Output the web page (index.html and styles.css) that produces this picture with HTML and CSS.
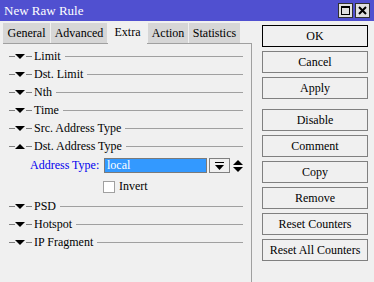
FILE: index.html
```html
<!DOCTYPE html>
<html lang="en">
<head>
  <meta charset="UTF-8" />
  <title>New Raw Rule</title>
  <link rel="stylesheet" href="styles.css">
</head>
<body>
  <div class="title-bar">
    <span class="title">New Raw Rule</span>
    <div class="win-buttons">
      <span class="win-btn"><svg width="9" height="9" viewBox="0 0 9 9"><rect x="0.5" y="0.5" width="8" height="8" fill="none" stroke="#000"/><line x1="0" y1="1.5" x2="9" y2="1.5" stroke="#000"/></svg></span>
      <span class="win-btn"><svg width="9" height="9" viewBox="0 0 9 9"><path d="M1 1 L8 8 M8 1 L1 8" stroke="#000" stroke-width="2"/></svg></span>
    </div>
  </div>

  <div class="main">
    <div class="left">
      <div class="tabs">
        <div class="tab" style="width: 47px">General</div>
        <div class="tab" style="width: 56px">Advanced</div>
        <div class="tab active" style="width: 39px">Extra</div>
        <div class="tab" style="width: 40px">Action</div>
        <div class="tab" style="width: 51px">Statistics</div>
      </div>
      <div class="panel">
        <div class="section"><span class="dash"></span><span class="arrow down"></span><span class="dash"></span><span class="label">Limit</span><span class="rule"></span></div>
        <div class="section"><span class="dash"></span><span class="arrow down"></span><span class="dash"></span><span class="label">Dst. Limit</span><span class="rule"></span></div>
        <div class="section"><span class="dash"></span><span class="arrow down"></span><span class="dash"></span><span class="label">Nth</span><span class="rule"></span></div>
        <div class="section"><span class="dash"></span><span class="arrow down"></span><span class="dash"></span><span class="label">Time</span><span class="rule"></span></div>
        <div class="section"><span class="dash"></span><span class="arrow down"></span><span class="dash"></span><span class="label">Src. Address Type</span><span class="rule"></span></div>
        <div class="section"><span class="dash"></span><span class="arrow up"></span><span class="dash"></span><span class="label">Dst. Address Type</span><span class="rule"></span></div>

        <div class="field-row">
          <span class="field-label">Address Type:</span>
          <span class="select-box">local</span>
          <span class="drop-btn"><svg width="9" height="8" viewBox="0 0 9 8"><rect x="0" y="0" width="9" height="1" fill="#000"/><polygon points="0,3 9,3 4.5,8" fill="#000"/></svg></span>
          <span class="updown"><svg width="10" height="12" viewBox="0 0 10 12"><polygon points="0,5 10,5 5,0" fill="#000"/><polygon points="0,7 10,7 5,12" fill="#000"/></svg></span>
        </div>
        <div class="check-row">
          <span class="checkbox"></span>
          <span>Invert</span>
        </div>

        <div class="section"><span class="dash"></span><span class="arrow down"></span><span class="dash"></span><span class="label">PSD</span><span class="rule"></span></div>
        <div class="section"><span class="dash"></span><span class="arrow down"></span><span class="dash"></span><span class="label">Hotspot</span><span class="rule"></span></div>
        <div class="section"><span class="dash"></span><span class="arrow down"></span><span class="dash"></span><span class="label">IP Fragment</span><span class="rule"></span></div>
      </div>
    </div>

    <div class="buttons">
      <div class="btn default">OK</div>
      <div class="btn">Cancel</div>
      <div class="btn">Apply</div>
      <div class="btn spaced">Disable</div>
      <div class="btn">Comment</div>
      <div class="btn">Copy</div>
      <div class="btn">Remove</div>
      <div class="btn">Reset Counters</div>
      <div class="btn">Reset All Counters</div>
    </div>
  </div>
</body>
</html>
```

FILE: styles.css
```css
body {
  margin: 0;
  width: 374px;
  height: 282px;
  background: #f0f0f0;
  font-family: 'Liberation Serif', serif;
  font-size: 12px;
  color: #000;
  overflow: hidden;
}
.title-bar {
  height: 21px;
  background: #5050d0;
  display: flex;
  align-items: center;
  justify-content: space-between;
  padding: 0 4px 0 4px;
}
.title {
  color: #fff;
  font-size: 13px;
}
.win-buttons {
  display: flex;
  gap: 2px;
}
.win-btn {
  width: 13px;
  height: 13px;
  background: #e0e0e0;
  border: 1px solid #303030;
  display: flex;
  align-items: center;
  justify-content: center;
}
.main {
  display: flex;
}
.left {
  width: 249px;
  padding-left: 3px;
}
.tabs {
  display: flex;
  align-items: flex-end;
  height: 22px;
  gap: 1px;
}
.tab {
  height: 20px;
  background: #d6d6d6;
  display: flex;
  align-items: center;
  justify-content: center;
}
.tab.active {
  height: 23px;
  margin-bottom: -1px;
  background: #f0f0f0;
  position: relative;
  z-index: 1;
}
.panel {
  border-top: 1px solid #a0a0a0;
  border-right: 1px solid #a0a0a0;
  height: 240px;
  padding-top: 3px;
}
.section {
  height: 18px;
  display: flex;
  align-items: center;
  padding-left: 6px;
}
.dash {
  width: 6px;
  height: 1px;
  background: #808080;
}
.arrow {
  width: 0;
  height: 0;
  border-left: 5px solid transparent;
  border-right: 5px solid transparent;
  margin: 0 1px 0 0;
}
.arrow.down {
  border-top: 5px solid #000;
}
.arrow.up {
  border-bottom: 5px solid #000;
}
.label {
  margin-left: 2px;
}
.rule {
  flex: 1;
  height: 1px;
  background: #a0a0a0;
  margin: 0 8px 0 4px;
}
.field-row {
  height: 21px;
  display: flex;
  align-items: center;
  padding-left: 27px;
}
.field-label {
  color: #0000ee;
  width: 74px;
}
.select-box {
  width: 99px;
  height: 13px;
  line-height: 13px;
  border: 1px solid #7a7a7a;
  background: #3399ff;
  color: #fff;
  padding-left: 2px;
  box-sizing: content-box;
}
.drop-btn {
  width: 19px;
  height: 13px;
  margin-left: 2px;
  border: 1px solid #808080;
  background: #f0f0f0;
  display: flex;
  align-items: center;
  justify-content: center;
}
.updown {
  margin-left: 3px;
  display: flex;
  align-items: center;
}
.check-row {
  height: 21px;
  display: flex;
  align-items: center;
  padding-left: 100px;
  gap: 4px;
}
.checkbox {
  width: 12px;
  height: 12px;
  background: #fff;
  border: 1px solid #a0a0a0;
  box-sizing: border-box;
}
.buttons {
  display: flex;
  flex-direction: column;
  gap: 4px;
  margin-left: 10px;
  padding-top: 4px;
}
.btn {
  width: 106px;
  height: 22px;
  box-sizing: border-box;
  border: 1px solid #808080;
  background: #f0f0f0;
  display: flex;
  align-items: center;
  justify-content: center;
}
.btn.default {
  border-color: #000;
}
.btn.spaced {
  margin-top: 6px;
}
```
